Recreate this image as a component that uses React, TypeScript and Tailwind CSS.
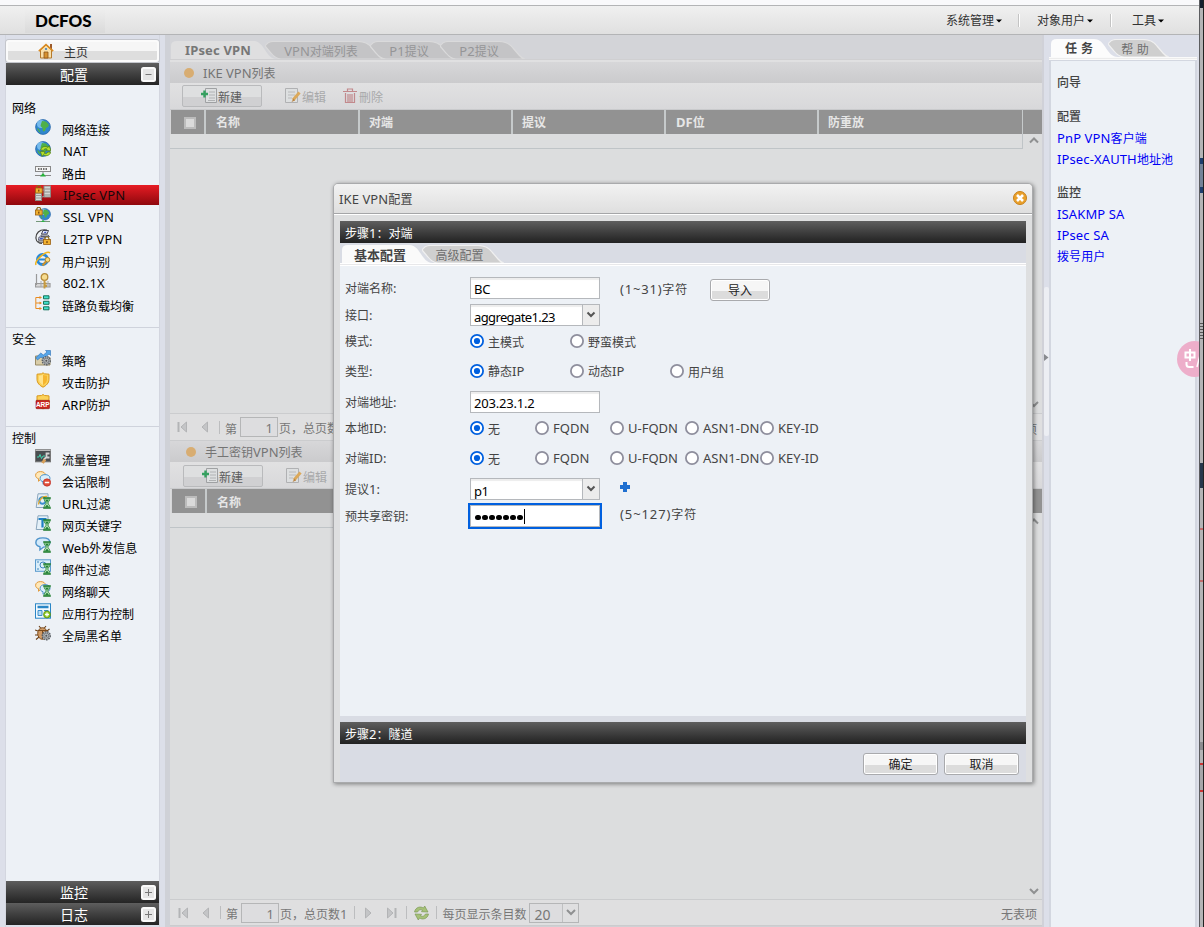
import React from 'react';

/* Mixed text: Latin runs are set slightly larger than the 12px Chinese glyphs. */
function T({ s }: { s: string }) {
  const parts = s.match(/[\x00-\x7f]+|[^\x00-\x7f]+/g) || [];
  return (
    <span className="whitespace-pre">
      {parts.map((p, i) => (
        <span key={i} className={p.charCodeAt(0) < 128 ? 'text-[13px]' : 'text-[12px]'}>{p}</span>
      ))}
    </span>
  );
}

const isLatin = (s: string) => /^[\x00-\x7f]+$/.test(s);

const Globe = () => (
  <>
    <circle cx="8" cy="8" r="7.4" fill="#2f86cf" stroke="#2a68ab" strokeWidth=".8" />
    <circle cx="6" cy="5" r="4" fill="#8ccbf5" opacity=".75" />
    <path d="M7 2l4 .5 3 3.500-1 2-2 1-1 3-2 .5-.5-3.500-2-2 .5-2zM2 9l2 1 1.500 3.500-1.500-.5z" fill="#4fb04a" />
  </>
);
const Lock = ({ x, y }: { x: number; y: number }) => (
  <g transform={`translate(${x} ${y})`}>
    <path d="M1.8 3.5V2.2a1.9 1.9 0 013.9 0v1.3" fill="none" stroke="#8a6a1a" strokeWidth="1.2" />
    <rect x=".4" y="3" width="6.8" height="5" fill="#f0b030" stroke="#9a5f10" strokeWidth=".8" />
    <rect x="3.2" y="4.6" width="1.2" height="2" fill="#6a3a05" />
  </g>
);
const Gear = () => (
  <g>
    <circle cx="11.3" cy="10.7" r="4" fill="#c5c8cb" stroke="#5c6166" strokeWidth="1.4" strokeDasharray="1.6 .8" />
    <circle cx="11.3" cy="10.7" r="2.6" fill="#b4b8bb" stroke="#666b70" strokeWidth=".8" />
    <circle cx="11.3" cy="10.7" r="1" fill="#555" />
  </g>
);
const Hourglass = () => (
  <g>
    <path d="M8.2 5h7.6M8.2 15h7.6" stroke="#1d7a2c" strokeWidth="1.6" />
    <path d="M9 5.5h6c0 2.5-2 3-2.2 4.5.2 1.500 2.200 2 2.200 4.500h-6c0-2.500 2-3 2.200-4.500C11 8.500 9 8 9 5.500z" fill="#bfe6bd" stroke="#2f8a3b" strokeWidth=".9" />
    <path d="M10 6.500h4l-2 3zM10 14l2-2.500 2 2.500z" fill="#23813a" />
  </g>
);
const Bubble = ({ x = 0, y = 0, fill, stroke }: { x?: number; y?: number; fill: string; stroke: string }) => (
  <path transform={`translate(${x} ${y})`} d="M5.500.6c3 0 5 1.400 5 3.700S8.500 8 6 8L3.500 10.300V7.700C1.600 7.200.6 6 .6 4.300.6 2 2.600.6 5.500.6z" fill={fill} stroke={stroke} strokeWidth="1" />
);

function Icon({ name }: { name: string }) {
  let body: React.ReactNode = null;
  switch (name) {
    case 'globe': body = <Globe />; break;
    case 'nat': body = (
      <>
        <Globe />
        <path d="M5.500 9c1-3.500 5-4.500 7.500-2.500l1.200-1.800L16 9.800l-5-.2 1.200-1.500c-1.700-.8-3-.2-3.700 1.200z" fill="#b4e02c" stroke="#4d7d13" strokeWidth=".7" />
        <path d="M15.800 11.200c-1 3.500-5 4.500-7.500 2.500l-1.200 1.800-1.800-5 5 .2-1.200 1.500c1.700.8 3 .2 3.700-1.200z" fill="#b4e02c" stroke="#4d7d13" strokeWidth=".7" />
      </>
    ); break;
    case 'route': body = (
      <>
        <rect x=".5" y="3.500" width="15" height="5" fill="#f5f5f5" stroke="#888" />
        <path d="M3 6h10" stroke="#444" strokeWidth="1.600" strokeDasharray="1.500 1" />
        <path d="M8 8.500v2M0 12.500h16" stroke="#888" />
        <path d="M5 13.500l3-3.500 3 3.500z" fill="#27b33a" />
      </>
    ); break;
    case 'ipsec': body = (
      <>
        <rect x="9" y="1" width="6.500" height="11" fill="#d5d9d5" stroke="#8b8b86" />
        <path d="M9 4h6.500M9 7h6.500M9 10h6.500" stroke="#8a8d88" />
        <rect x=".5" y="8" width="6" height="7.500" fill="#d5d9d5" stroke="#8b8b86" />
        <path d="M.5 10.500h6M.5 13h6M7 12l3-1M7 5h3" stroke="#999" />
        <Lock x={0} y={0} />
      </>
    ); break;
    case 'ssl': body = (
      <>
        <g transform="translate(3.500 1) scale(.78)"><Globe /></g>
        <path d="M1 14.500h14M8 13v1.500" stroke="#75977a" />
        <path d="M6 15l2-2 2 2z" fill="#28b344" />
        <Lock x={0} y={0} />
      </>
    ); break;
    case 'l2tp': body = (
      <>
        <path d="M12 1C4-.5.5 5 1 9.500c.3 3 3 5 6 5" fill="none" stroke="#444" strokeWidth="1.200" />
        <path d="M8 1.500h5.500l-1.500 3.500H6.500z" fill="#e8ecff" stroke="#334" strokeWidth=".9" />
        <path d="M9.500 2.700h2l-.5 1.300h-2z" fill="#3a55c8" />
        <path d="M6 6h7l1.500 1.500H6zM4 8h5.500l-1 3H3.500z" fill="#e0e3f5" stroke="#445" strokeWidth=".8" />
        <path d="M5 9h3l-.4 1.200h-3z" fill="#3a55c8" />
        <path d="M3 12h6v1.500H4z" fill="#ddd" stroke="#444" strokeWidth=".7" />
        <Lock x={8.200} y={7.500} />
      </>
    ); break;
    case 'user': body = (
      <>
        <circle cx="7.500" cy="8.500" r="5" fill="none" stroke="#2788d8" strokeWidth="3" />
        <path d="M4 8.500h8" stroke="#2788d8" strokeWidth="2" />
        <path d="M1 14C-1 10 11-1 15 1.800" fill="none" stroke="#f2b51d" strokeWidth="1.500" />
        <circle cx="12.500" cy="8.800" r="2.300" fill="#f8dc80" stroke="#b8862a" />
        <path d="M11 10.500L7.500 14.500" stroke="#c8912c" strokeWidth="2" />
      </>
    ); break;
    case 'dot1x': body = (
      <>
        <path d="M1.500 1v11M.5 10.500h14.500v3.500H.5z" fill="#d6d6d6" stroke="#999" strokeWidth="1.200" />
        <path d="M6 8v6M13 8v6" stroke="#a9a9a9" />
        <circle cx="9.500" cy="4" r="3.300" fill="#f6dc90" stroke="#b58a38" strokeWidth="1.300" />
        <path d="M9.500 7v8.500M9.500 13h2.500M9.500 10.500h2" stroke="#c59a42" strokeWidth="1.900" />
      </>
    ); break;
    case 'balance': body = (
      <>
        <path d="M6 2.500H.8v11H6M1 8h5" fill="none" stroke="#e88b20" strokeWidth="1" />
        <path d="M4.500 1L7 2.500 4.500 4zM4.500 6.500L7 8 4.500 9.500zM4.500 12L7 13.500 4.500 15z" fill="#e88b20" />
        <path d="M8.500.8h5.500v3H8.500zM8.500 6.300h5.500v3H8.500zM8.500 11.800h5.500v3H8.500z" fill="#42e1cb" stroke="#16735a" />
      </>
    ); break;
    case 'policy': body = (
      <>
        <path d="M.5 6h5l1.500 1.500h8V15H.5z" fill="#d9cda8" stroke="#998c66" />
        <path d="M.8 7.800l5-4.800 2.500 2L12 2l-1.500-1.500h5v5L14 4 8.500 9 6 7l-3.500 3z" fill="#55a5e8" stroke="#2c70b5" strokeWidth=".6" />
        <Gear />
      </>
    ); break;
    case 'shield': body = (
      <>
        <path d="M8 .8l1.500 1 4.500.4v5c0 4-3 6.500-6 8-3-1.500-6-4-6-8v-5l4.500-.4z" fill="#fbd25a" stroke="#d9981c" />
        <path d="M8 3l4 .8v3.500c0 2.700-2 4.700-4 5.700z" fill="#f6b52e" />
        <path d="M8 3l-4 .8v3.500c0 2.700 2 4.700 4 5.700z" fill="#ffe28a" />
      </>
    ); break;
    case 'arp': body = (
      <>
        <path d="M8 .5l1.500 1 4.500.4v5c0 4-3 6.500-6 8-3-1.500-6-4-6-8v-5l4.500-.4z" fill="#fbd25a" stroke="#d9981c" />
        <rect x="1" y="6.300" width="13.500" height="8.400" rx=".8" fill="#cc2420" stroke="#8a1010" strokeWidth=".6" />
        <text x="7.800" y="13" textAnchor="middle" fontSize="6.500" fontWeight="700" fontFamily="Liberation Sans, sans-serif" fill="#fff">ARP</text>
      </>
    ); break;
    case 'traffic': body = (
      <>
        <rect x=".5" y=".8" width="15" height="12" fill="#4a4e51" stroke="#777" />
        <path d="M.5 1.500h15" stroke="#bbb" />
        <path d="M2 8h2l1-2.500 1.500 4L8 7h2" fill="none" stroke="#45d7b1" />
        <path d="M14.500 4.500h-3v4h3M11.500 8l-3 3" fill="none" stroke="#d3d3d3" strokeWidth="1.800" />
        <path d="M10 10.500l-2.500 3.500" stroke="#d8a05a" strokeWidth="3" />
      </>
    ); break;
    case 'session': body = (
      <>
        <Bubble fill="#ffe8b8" stroke="#e09a3c" />
        <Bubble x={4.500} y={3} fill="#d9eefc" stroke="#4f94cb" />
        <circle cx="12" cy="11.500" r="3.700" fill="#e2503a" stroke="#b51f1a" strokeWidth=".6" />
        <path d="M9.800 11.500h4.400" stroke="#fff" strokeWidth="1.500" />
      </>
    ); break;
    case 'url': body = (
      <>
        <path d="M3 .8h10v13.700H1.200z" fill="#e6eff6" stroke="#8ba6bc" />
        <circle cx="7.500" cy="7.500" r="3.200" fill="none" stroke="#3b8ecb" strokeWidth="2" />
        <path d="M3.500 11.500c0-4.500 4.500-9 8.500-8" fill="none" stroke="#e9ab2a" strokeWidth="1.400" />
        <Hourglass />
      </>
    ); break;
    case 'keyword': body = (
      <>
        <path d="M3 .8h10v13.700H1.200z" fill="#e4f0f8" stroke="#8ba6bc" />
        <path d="M3.500 4h8M7.500 4v8.500" stroke="#1e7fc4" strokeWidth="2.200" />
        <Hourglass />
      </>
    ); break;
    case 'web': body = (
      <>
        <g transform="scale(1.420 1.250)"><Bubble fill="#d3eafa" stroke="#4f94cb" /></g>
        <Hourglass />
      </>
    ); break;
    case 'mail': body = (
      <>
        <rect x=".5" y=".8" width="15" height="11.500" fill="#d9edf9" stroke="#5b9bcd" />
        <circle cx="8" cy="6" r="3" fill="none" stroke="#3f85bd" />
        <path d="M2 3h2M2 10h2" stroke="#3f85bd" />
        <Hourglass />
      </>
    ); break;
    case 'chat': body = (
      <>
        <Bubble fill="#ffe8b8" stroke="#e09a3c" />
        <Bubble x={4.500} y={3} fill="#d9eefc" stroke="#4f94cb" />
        <Hourglass />
      </>
    ); break;
    case 'app': body = (
      <>
        <rect x=".5" y=".8" width="15" height="14.400" fill="#f2f9fe" stroke="#2a86c6" />
        <path d="M2.500 4h11" stroke="#2a86c6" strokeWidth="2.500" />
        <path d="M3 7.500h4v5H3zM9 7.500h4.500" fill="#b9dcf4" stroke="#3b8ecb" />
        <circle cx="12" cy="11.500" r="3.500" fill="#8fc921" stroke="#4e8410" strokeWidth=".7" />
        <path d="M12 9.500v4M10 11.500h4" stroke="#fff" strokeWidth="1.300" />
      </>
    ); break;
    case 'bug': body = (
      <>
        <path d="M4 1l2 2.500M11 1L9 3.500M0 5l3 1M0 10h3M1 14.500L4 12M14.500 4L12 6" stroke="#6b3f16" strokeWidth="1.100" />
        <ellipse cx="7.500" cy="8.500" rx="4.800" ry="5.800" fill="#d09a64" stroke="#7b4a1c" />
        <path d="M3.500 5.500h8M7.500 6v8" stroke="#7b4a1c" />
        <Gear />
      </>
    ); break;
  }
  return <svg width="16" height="16" viewBox="0 0 16 16" className="shrink-0">{body}</svg>;
}

const groups = [
  { title: '网络', items: [['globe', '网络连接'], ['nat', 'NAT'], ['route', '路由'], ['ipsec', 'IPsec VPN'], ['ssl', 'SSL VPN'], ['l2tp', 'L2TP VPN'], ['user', '用户识别'], ['dot1x', '802.1X'], ['balance', '链路负载均衡']] },
  { title: '安全', items: [['policy', '策略'], ['shield', '攻击防护'], ['arp', 'ARP防护']] },
  { title: '控制', items: [['traffic', '流量管理'], ['session', '会话限制'], ['url', 'URL过滤'], ['keyword', '网页关键字'], ['web', 'Web外发信息'], ['mail', '邮件过滤'], ['chat', '网络聊天'], ['app', '应用行为控制'], ['bug', '全局黑名单']] },
];

function AccordionBar({ label, open }: { label: string; open?: boolean }) {
  return (
    <div className="flex h-[22px] shrink-0 items-center bg-linear-to-b from-[#5e5e5e] to-[#242424] text-[14px] text-white">
      <span className="w-[136px] pt-px text-center leading-[23px]">{label}</span>
      <svg width="15" height="15" viewBox="0 0 15 15" className="-ml-px">
        <rect width="15" height="15" rx="2.500" fill="#fafafa" />
        <rect x="2" y="2" width="11" height="11" fill="#e6e6e6" />
        <path d={open ? 'M4.500 7.500h6' : 'M4 7.500h7M7.500 4v7'} stroke="#777" />
      </svg>
    </div>
  );
}

function Sidebar() {
  return (
    <aside className="flex w-[155px] shrink-0 flex-col border-x border-[#d3d6df] px-0 pt-[5px]">
      <div className="flex h-[22px] shrink-0 items-center rounded-[3px] border-2 border-[#fbfbfb] bg-[linear-gradient(#f6f6f6_50%,#dedede_50%)] pl-[30px] text-[12px] text-[#333] shadow-[0_0_0_1px_#c4c6cc]">
        <svg width="16" height="16" viewBox="0 0 16 16" className="mr-[10px]">
          <path d="M12 1h2v5h-2z" fill="#9b5a2b" />
          <path d="M2.500 7L8 2l5.500 5v8h-11z" fill="#f8dfaa" stroke="#b57a2d" />
          <path d="M.8 8.200L8 1.500l7.200 6.700" fill="none" stroke="#d98a22" strokeWidth="1.600" />
          <path d="M6 9h4v6H6z" fill="#d6912f" stroke="#8c5416" strokeWidth=".8" />
          <circle cx="8" cy="6" r="1.100" fill="#3b7fc4" />
        </svg>
        <span className="pt-[3px]">主页</span>
      </div>
      <div className="h-px shrink-0" />
      <AccordionBar label="配置" open />
      <div className="flex-1 bg-[#edf1f6] pt-[12px]">
        {groups.map((g, gi) => (
          <div key={g.title} className={gi === 0 ? 'h-[230px]' : gi === 1 ? 'h-[99px] border-t border-[#cfd3dc]' : 'border-t border-[#cfd3dc]'}>
            <div className="h-[22px] pl-[6px] text-[12px] leading-[23px] text-black">{g.title}</div>
            {g.items.map(([ic, label]) => (
              <div key={label} className="h-[22px]">
                <div className={'flex h-5 pl-[29px] ' + (label === 'IPsec VPN' ? 'bg-linear-to-b from-[#e71c24] to-[#8f080d] text-[#16080a]' : 'text-black')}>
                  <Icon name={ic} />
                  <span className={isLatin(label) ? 'ml-[12px] -mt-px leading-[20px] tracking-[0.150px]' : 'ml-[11px] leading-[20px]'}><T s={label} /></span>
                </div>
              </div>
            ))}
          </div>
        ))}
      </div>
      <AccordionBar label="监控" />
      <AccordionBar label="日志" />
      <div className="h-[2px] shrink-0" />
    </aside>
  );
}

/* A folded tab tucked behind its left neighbour. */
function InactiveTab({ w, label, tone }: { w: number; label: string; tone: 'dim' | 'lit' }) {
  return (
    <div className="relative flex h-[18px] items-end justify-center pr-[7px]" style={{ width: w }}>
      <svg width={w} height="18" viewBox={`0 0 ${w} 18`} className="absolute bottom-0 left-0">
        <path
          d={`M0 5Q3 .5 8 .5H${w - 26}Q${w - 17} .5 ${w - 12} 7L${w - 6} 14Q${w - 3} 17.500 ${w} 18H16Q10 17.500 6 12z`}
          fill={tone === 'dim' ? '#c4c4c6' : '#cfcfcf'}
          stroke={tone === 'dim' ? '#dadadb' : '#f0f0f0'}
          strokeWidth="1.200"
        />
      </svg>
      <span className={'relative leading-[14px] ' + (tone === 'dim' ? 'text-[#959597]' : 'text-[#6f6f6f]')}><T s={label} /></span>
    </div>
  );
}

function ActiveTab({ w, fill, children }: { w: number; fill: string; children: React.ReactNode }) {
  return (
    <div className="relative z-10 flex h-[18px] items-end" style={{ width: w }}>
      <svg width={w} height="18" viewBox={`0 0 ${w} 18`} className="absolute bottom-0 left-0">
        <path d={`M0 18V5Q0 0 6 0H${w - 24}C${w - 12} 0 ${w - 12} 18 ${w} 18z`} fill={fill} />
      </svg>
      <div className="relative">{children}</div>
    </div>
  );
}

function TitleStrip({ text, pad }: { text: string; pad: string }) {
  return (
    <div className={'flex h-[21px] shrink-0 items-center bg-linear-to-b from-[#d7d7d9] to-[#cbcbcd] text-[#747474] ' + pad}>
      <span className="h-[10px] w-[10px] rounded-full bg-[#d8ad72]" />
      <span className="ml-[9px] leading-[20px]"><T s={text} /></span>
    </div>
  );
}

function Toolbar({ pad }: { pad: string }) {
  return (
    <div className={'flex h-[27px] shrink-0 items-center border-b border-[#c9cacc] bg-linear-to-b from-[#e1e1e2] to-[#d8d8da] text-[12px] ' + pad}>
      <div className="flex h-[22px] w-[80px] items-center rounded-[2px] border border-[#b9babc] bg-[linear-gradient(#dedfe0_55%,#d0d0d2_55%)] pl-[18px] text-[#5d5d5d]">
        <svg width="17" height="16" viewBox="0 0 17 16">
          <path d="M4.500.5h11v14h-11z" fill="#dddfe0" stroke="#9fa1a3" />
          <path d="M8 4h6M8 7h6M8 10h6M7 12.500h7" stroke="#b0b2b4" />
          <path d="M3.500 2.500v7M0 6h7" stroke="#35a060" strokeWidth="2.400" />
        </svg>
        <span className="pt-[3px]">新建</span>
      </div>
      <div className="ml-[23px] flex items-center text-[#a8a9aa]">
        <svg width="17" height="16" viewBox="0 0 17 16">
          <path d="M.5.500h12v14H.5z" fill="#dddfe0" stroke="#b0b1b3" />
          <path d="M3 4h7M3 7h7M3 10h4" stroke="#b9babc" />
          <path d="M14.500 4.500L8 12" stroke="#dba95c" strokeWidth="3" />
          <path d="M8.500 10.500L6.500 14l3.500-1.500z" fill="#b98548" />
        </svg>
        <span className="pt-[3px]">编辑</span>
      </div>
      <div className="ml-[17px] flex items-center text-[#a8a9aa]">
        <svg width="15" height="16" viewBox="0 0 15 16" className="mr-[1px]">
          <path d="M0 3.500h14M4.500 3V1h5v2M2.500 5v9.500h9V5M5 6v8M7 6v8M9 6v8" fill="none" stroke="#c2898c" strokeWidth="1.200" />
        </svg>
        <span className="pt-[3px]">刪除</span>
      </div>
    </div>
  );
}

const columns: [string, string][] = [
  ['名称', 'w-[154px] border-r-2 pl-[10px]'],
  ['对端', 'w-[153px] border-r-2 pl-[9px]'],
  ['提议', 'w-[153px] border-r-2 pl-[9px]'],
  ['DF位', 'w-[153px] border-r-2 pl-[10px]'],
  ['防重放', 'w-[204px] border-r pl-[9px]'],
];

function TableHead({ shift }: { shift: string }) {
  return (
    <div className={'flex h-[24px] shrink-0 border-l border-[#d6d6d8] bg-[#929292] text-[12px] font-bold text-[#e6e6e6] ' + shift}>
      <div className="flex w-[35px] items-center justify-center border-r-2 border-[#c6cacb] pl-[5px] pt-px">
        <span className="h-[12px] w-[12px] border-2 border-[#bcbcbc] bg-[#dadada]" />
      </div>
      {columns.map(([c, cls]) => (
        <div key={c} className={'border-[#c6cacb] ' + cls}><T s={c} /></div>
      ))}
    </div>
  );
}

function Chevron({ up = false }: { up?: boolean }) {
  return (
    <svg width="10" height="7" viewBox="0 0 10 7">
      <path d={up ? 'M1 5.500l4-4 4 4' : 'M1 1l4 4 4-4'} fill="none" stroke="#8f9091" strokeWidth="2" />
    </svg>
  );
}

function PageArrow({ dir, end }: { dir: 'l' | 'r'; end?: boolean }) {
  return (
    <svg width="11" height="12" viewBox="0 0 11 12" className={dir === 'r' ? 'rotate-180' : ''}>
      {end && <path d="M1.500 1v10" stroke="#b3b4b6" strokeWidth="2" />}
      <path d="M9.500 1v10L4 6z" fill="#c4c5c7" stroke="#b3b4b6" />
    </svg>
  );
}
const Sep = () => <span className="h-[13px] w-px bg-[#bcbdbf]" />;

function Pager({ pad }: { pad: string }) {
  return (
    <div className={'flex shrink-0 items-center border-y border-[#cbccce] bg-[#dfdfe0] text-[12px] text-[#777] ' + pad}>
      <PageArrow dir="l" end /><span className="w-[10px]" /><PageArrow dir="l" />
      <span className="w-[10px]" /><Sep />
      <span className="ml-[5px] pt-[5px]">第</span>
      <span className="ml-[3px] h-[20px] w-[38px] border border-[#b5b6b7] bg-[#dddddf] pr-[4px] pt-px text-right text-[13px] leading-[19px]">1</span>
      <span className="ml-[1px] pt-[4px]"><T s="页，总页数1" /></span>
      <span className="w-[7px]" /><Sep /><span className="w-[9px]" />
      <PageArrow dir="r" /><span className="w-[11px]" /><PageArrow dir="r" end />
      <span className="w-[9px]" /><Sep />
      <svg width="17" height="16" viewBox="0 0 16 16" className="ml-[6px]">
        <path d="M1 7c1-5 6-6 9-4l1.200-2 3.300 6-6.500-.3L9 5C7 4 5 5 4 7zM15 9c-1 5-6 6-9 4l-1.200 2-3.300-6 6.500.3L7 11c2 1 4 0 5-2z" fill="#a6c178" stroke="#7d9a58" strokeWidth=".7" />
      </svg>
      <span className="w-[6px]" /><Sep />
      <span className="ml-[5px] pt-[5px]">每页显示条目数</span>
      <span className="ml-[3px] flex h-[20px] w-[50px] border border-[#b5b6b7]">
        <span className="w-[32px] bg-[#dddddf] pl-[4px] text-[14px] leading-[21px]">20</span>
        <span className="flex flex-1 items-center justify-center border-l border-[#bfc0c1]"><Chevron /></span>
      </span>
      <span className="ml-auto pt-[5px]">无表项</span>
    </div>
  );
}

function Workspace() {
  return (
    <main className="flex w-[872px] shrink-0 flex-col bg-[#dcddde]">
      <div className="flex h-[24px] shrink-0 items-end bg-[#d3d4d8] pl-[1px]">
        <ActiveTab w={106} fill="#dfdfe0">
          <div className="pl-[14px] font-bold leading-[17px] tracking-[0.150px] text-[#777]"><T s="IPsec VPN" /></div>
        </ActiveTab>
        <div className="-ml-[12px] flex"><InactiveTab w={119} label="VPN对端列表" tone="dim" /></div>
        <div className="-ml-[14px] flex"><InactiveTab w={85} label="P1提议" tone="dim" /></div>
        <div className="-ml-[15px] flex"><InactiveTab w={85} label="P2提议" tone="dim" /></div>
      </div>
      <div className="h-[3px] shrink-0 border-t border-[#cfcfd1] bg-[#e0e0e1]" />
      <TitleStrip text="IKE VPN列表" pad="pl-[14px]" />
      <Toolbar pad="pl-[12px]" />
      <TableHead shift="leading-[25px]" />
      <div className="flex h-[279px] shrink-0">
        <div className="h-[15px] w-[853px] border-b border-r border-[#bfc4c7]" />
        <div className="flex flex-1 flex-col items-center justify-between pb-[5px] pl-[3px] pt-[3px]"><Chevron up /><Chevron /></div>
      </div>
      <Pager pad="h-[28px] pl-[7px] pr-[5px]" />
      <TitleStrip text="手工密钥VPN列表" pad="pl-[16px]" />
      <Toolbar pad="pl-[13px] pt-[2px]" />
      <TableHead shift="ml-px leading-[27px]" />
      <div className="flex flex-1">
        <div className="h-[15px] w-[853px] border-b border-[#bfc4c7]" />
        <div className="flex flex-1 flex-col items-center justify-between pb-[4px] pl-[3px] pt-[5px]"><Chevron up /><Chevron /></div>
      </div>
      <Pager pad="h-[27px] pl-[8px] pr-[5px]" />
      <div className="h-px shrink-0 bg-[#d0d0d4]" />
    </main>
  );
}

function RightPanel() {
  return (
    <aside className="flex w-[148px] shrink-0 flex-col pt-[4px]">
      <div className="flex h-[18px] shrink-0 items-end pl-[2px]">
        <ActiveTab w={67} fill="#fcfcfc">
          <div className="pl-[14px] text-[12px] font-bold leading-[16px] tracking-[0.500px] text-[#444]">任 务</div>
        </ActiveTab>
        <div className="-ml-[10px] flex"><InactiveTab w={61} label="帮 助" tone="lit" /></div>
      </div>
      <div className="h-[3px] shrink-0 border-y border-[#fafafa] bg-[#ececec]" />
      <div className="flex-1 border-x-2 border-t border-[#d3d7e0] bg-[#edf1f6] pl-[6px] pt-[10px] text-[12px] text-[#444]">
        <div className="h-[34px] font-medium leading-[23px]">向导</div>
        <div className="h-[22px] font-medium leading-[23px]">配置</div>
        <div className="tracking-[0.120px] text-[#0000f5]">
          <div className="h-[21px] leading-[23px]"><T s="PnP VPN客户端" /></div>
          <div className="h-[33px] leading-[23px]"><T s="IPsec-XAUTH地址池" /></div>
        </div>
        <div className="h-[22px] font-medium leading-[23px]">监控</div>
        <div className="tracking-[0.120px] text-[#0000f5]">
          <div className="h-[21px] leading-[23px]"><T s="ISAKMP SA" /></div>
          <div className="h-[21px] leading-[23px]"><T s="IPsec SA" /></div>
          <div className="h-[21px] leading-[23px]">拨号用户</div>
        </div>
      </div>
    </aside>
  );
}

function Btn({ label, w }: { label: string; w: string }) {
  return (
    <button className={'h-[22px] rounded-[3px] border border-[#a9aaad] bg-[linear-gradient(#f6f6f6_55%,#dcdcdc_55%)] pt-[2px] text-[12px] leading-[18px] text-[#222] shadow-[inset_0_0_0_1px_#fff] ' + w}>{label}</button>
  );
}

function Radio({ label, on, w }: { label: string; on?: boolean; w: string }) {
  const shift = isLatin(label) ? '-mt-[2px]' : label.endsWith('IP') ? 'mt-0' : 'mt-[2px]';
  return (
    <label className={'flex items-center whitespace-nowrap ' + w}>
      <svg width="14" height="14" viewBox="0 0 14 14" className="mr-[4px] shrink-0">
        <circle cx="7" cy="7" r="6.100" fill="#fff" stroke={on ? '#0060df' : '#8f8f9d'} strokeWidth="1.800" />
        {on && <circle cx="7" cy="7" r="3.100" fill="#0060df" />}
      </svg>
      <span className={'leading-[18px] ' + shift}><T s={label} /></span>
    </label>
  );
}

function Field({ value }: { value: string }) {
  return <div className="h-[22px] w-[130px] border border-[#b5b8bc] bg-white pl-[3px] pt-[2px] text-[13px] leading-[19px] tracking-[-0.200px] text-black shadow-[inset_0_2px_1px_#ededed]">{value}</div>;
}
function Select({ value }: { value: string }) {
  return (
    <div className="flex h-[22px] w-[130px] border border-[#b5b8bc] bg-white text-[13px] text-black">
      <div className="w-[111px] pl-[3px] pt-[2px] leading-[20px] tracking-[-0.620px] shadow-[inset_0_2px_1px_#ededed]">{value}</div>
      <div className="flex flex-1 items-center justify-center border-l border-[#b5b8bc] bg-[#ececec] pb-[2px]">
        <svg width="10" height="7" viewBox="0 0 10 7"><path d="M1.500 1.500L5 5l3.500-3.500" fill="none" stroke="#555" strokeWidth="2" /></svg>
      </div>
    </div>
  );
}
function Row({ label, h, children }: { label: string; h: string; children: React.ReactNode }) {
  return (
    <div className={'flex items-center ' + h}>
      <div className="w-[126px] pl-px leading-[20px]"><T s={label} /></div>
      {children}
    </div>
  );
}
const idOptions: [string, string][] = [['无', 'w-[65px]'], ['FQDN', 'w-[75px]'], ['U-FQDN', 'w-[75px]'], ['ASN1-DN', 'w-[75px]'], ['KEY-ID', '']];

function Modal() {
  const bar = 'h-[22px] shrink-0 bg-linear-to-b from-[#5f5f5f] to-[#222] pl-[5px] leading-[23px] text-white';
  return (
    <section className="absolute left-[333px] top-[183px] z-20 flex h-[600px] w-[700px] flex-col rounded-t-[5px] border border-[#a9aaac] bg-[#dedfe0] text-[#444] shadow-[1px_1px_4px_rgba(0,0,0,0.450)]">
      <header className="flex h-[30px] shrink-0 items-center justify-between rounded-t-[4px] border-b border-[#a5a6a8] bg-linear-to-b from-[#f2f2f2] to-[#dfdfdf] pb-[2px] pl-[5px] pr-[5px]">
        <span className="tracking-[0.100px]"><T s="IKE VPN配置" /></span>
        <svg width="14" height="14" viewBox="0 0 14 14">
          <circle cx="7" cy="7" r="6.500" fill="#e9a02c" stroke="#c9821b" />
          <path d="M4 4l6 6M10 4l-6 6" stroke="#fff" strokeWidth="2.600" />
        </svg>
      </header>
      <div className="h-px shrink-0 bg-white" />
      <div className="mx-[6px] mt-[6px] flex flex-1 flex-col bg-[#d9dce4]">
        <div className={bar}><T s="步骤1：对端" /></div>
        <div className="flex h-[20px] shrink-0 items-end pl-[2px]">
          <ActiveTab w={91} fill="#fafafa">
            <div className="pl-[12px] text-[13px] font-bold leading-[15px] text-[#444]">基本配置</div>
          </ActiveTab>
          <div className="-ml-[11px] flex"><InactiveTab w={82} label="高级配置" tone="lit" /></div>
        </div>
        <div className="h-[3px] shrink-0 border-y border-white bg-[#e8e8ea]" />
        <div className="flex-1 bg-[#edf1f6] pl-[4px] pt-[7px]">
          <Row label="对端名称:" h="h-[30px]">
            <Field value="BC" />
            <span className="ml-[20px] w-[90px] tracking-[0.800px]"><T s="(1~31)字符" /></span>
            <div className="mt-[4px] flex"><Btn label="导入" w="w-[60px]" /></div>
          </Row>
          <Row label="接口:" h="h-[24px]"><Select value="aggregate1.23" /></Row>
          <Row label="模式:" h="h-[28px]"><Radio label="主模式" on w="w-[100px]" /><Radio label="野蛮模式" w="" /></Row>
          <Row label="类型:" h="h-[32px]"><Radio label="静态IP" on w="w-[100px]" /><Radio label="动态IP" w="w-[100px]" /><Radio label="用户组" w="" /></Row>
          <Row label="对端地址:" h="h-[30px]"><Field value="203.23.1.2" /></Row>
          <Row label="本地ID:" h="h-[22px]">{idOptions.map(([l, w], i) => <Radio key={l} label={l} on={i === 0} w={w} />)}</Row>
          <Row label="对端ID:" h="h-[38px]">{idOptions.map(([l, w], i) => <Radio key={l} label={l} on={i === 0} w={w} />)}</Row>
          <Row label="提议1:" h="h-[24px]">
            <Select value="p1" />
            <svg width="10" height="10" viewBox="0 0 10 10" className="mb-[4px] ml-[20px]"><path d="M5 0v10M0 5h10" stroke="#1f6fd0" strokeWidth="4" /></svg>
          </Row>
          <Row label="预共享密钥:" h="h-[30px]">
            <div className="flex h-[22px] w-[130px] items-center border border-[#b5b8bc] bg-white pl-[4px] pt-[3px] ring-2 ring-[#0060df]">
              {Array.from({ length: 7 }, (_, i) => <span key={i} className="mr-[1.500px] h-[5.500px] w-[5.500px] rounded-full bg-black" />)}
              <span className="-mt-[2px] h-[15px] w-px shrink-0 bg-black" />
            </div>
            <span className="mb-[7px] ml-[20px] tracking-[0.900px]"><T s="(5~127)字符" /></span>
          </Row>
        </div>
        <div className="h-[6px] shrink-0" />
        <div className={bar}><T s="步骤2：隧道" /></div>
        <div className="flex h-[38px] shrink-0 justify-end gap-[6px] pr-[7px] pt-[9px]"><Btn label="确定" w="w-[75px]" /><Btn label="取消" w="w-[75px]" /></div>
      </div>
    </section>
  );
}

function TopMenu({ label, w }: { label: string; w: string }) {
  return (
    <div className={'flex items-center justify-center gap-[2px] pt-[2px] text-[12px] text-[#333] ' + w}>
      <span>{label}</span>
      <svg width="6" height="4" viewBox="0 0 6 4"><path d="M0 .5h6L3 3.500z" fill="#000" /></svg>
    </div>
  );
}

export default function App() {
  return (
    <div className="relative flex h-[927px] w-[1204px] overflow-hidden bg-[#dcdfe9] font-['Noto_Sans','Noto_Sans_CJK_SC',sans-serif]">
      <div className="flex w-[1199px] shrink-0 flex-col">
        <div className="h-[5px] shrink-0 bg-[#f9f9fb]" />
        <header className="flex h-[30px] shrink-0 items-center border-b border-t border-[#b3b4b6] bg-linear-to-b from-[#f0f0f0] to-[#e0e0e0]">
          <div className="ml-[25px] h-[25px] w-[80px] bg-linear-to-b from-[#efefef] to-[#dadada] pl-[10px] font-['Lato','Noto_Sans',sans-serif] text-[17px] font-black leading-[25px] tracking-[-0.050px] text-black">DCFOS</div>
          <div className="ml-auto flex h-[13px] items-center">
            <TopMenu label="系统管理" w="w-[88px]" />
            <span className="h-[13px] w-[2px] border-l border-[#c4c4c4] bg-white" />
            <TopMenu label="对象用户" w="w-[90px]" />
            <span className="h-[13px] w-[2px] border-l border-[#c4c4c4] bg-white" />
            <TopMenu label="工具" w="w-[72px]" />
            <span className="w-[15px]" />
          </div>
        </header>
        <div className="flex min-h-0 flex-1">
          <div className="w-[5px] shrink-0" />
          <Sidebar />
          <div className="w-[5px] shrink-0" />
          <div className="w-[5px] shrink-0 bg-[#cfd1d7]" />
          <Workspace />
          <div className="w-[2px] shrink-0 bg-[#d0d1d8]" />
          <div className="flex w-[5px] shrink-0 flex-col">
            <div className="h-[252px]" />
            <div className="flex h-[149px] items-center rounded-[2px] bg-[#eceef3] pb-[8px]">
              <svg width="5" height="7" viewBox="0 0 5 7"><path d="M0 0l4.500 3.500L0 7z" fill="#888a8e" /></svg>
            </div>
          </div>
          <RightPanel />
        </div>
      </div>
      <div className="flex w-[5px] shrink-0 flex-col border-l border-r border-l-[#5c5d60] border-r-[#222] bg-[#b4b4b6]">
        <div className="h-[8px] bg-[#15202f]" />
        <div className="h-[150px]" />
        <div className="h-[6px] bg-[#1e3d6d]" />
        <div className="h-[23px] bg-[#748398]" />
        <div className="h-[6px] bg-[#1e3d6d]" />
        <div className="h-[130px]" />
        <div className="h-[16px] bg-[repeating-linear-gradient(#555_0_1px,#b4b4b6_1px_3px)]" />
        <div className="h-[124px]" />
        <div className="h-[25px] bg-[#27374c]" />
        <div className="h-[40px]" />
        <div className="h-[2px] bg-[#c46a6a]" />
        <div className="h-[50px]" />
        <div className="h-[2px] bg-[#c46a6a]" />
        <div className="h-[160px]" />
        <div className="h-[8px] bg-[#8c8c90]" />
        <div className="h-[13px]" />
        <div className="h-[2px] bg-[#c33]" />
        <div className="h-[25px] bg-[#a6a6a9]" />
        <div className="h-[2px] bg-[#c33]" />
      </div>
      <Modal />
      <div className="absolute left-[1177px] top-[341px] h-[36px] w-[22px] overflow-hidden">
        <svg width="36" height="36" viewBox="0 0 36 36">
          <circle cx="18" cy="18" r="18" fill="#edaeca" />
          <path d="M8.500 11.500h9v5h-9zM13 8v12M9.500 21v2.500q0 2.500 3 2.500h4" fill="none" stroke="#fff" strokeWidth="2" />
          <path d="M20 26l4-16" stroke="#fff" strokeWidth="1.500" />
        </svg>
      </div>
    </div>
  );
}
